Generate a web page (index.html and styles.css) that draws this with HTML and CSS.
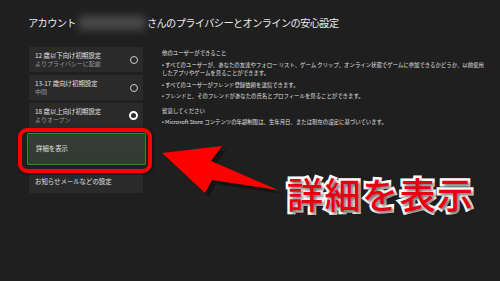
FILE: index.html
```html
<!DOCTYPE html>
<html lang="ja">
<head>
<meta charset="utf-8">
<link rel="stylesheet" href="styles.css">
</head>
<body>
<div class="page">
  <h1 class="title">アカウント<span class="blurname"></span>さんのプライバシーとオンラインの安心設定</h1>
  <div class="main">
    <div class="menu">
      <div class="card">
        <div class="txt"><div class="t">12 歳以下向け初期設定</div><div class="s">よりプライバシーに配慮</div></div>
        <span class="radio"></span>
      </div>
      <div class="card">
        <div class="txt"><div class="t">13-17 歳向け初期設定</div><div class="s">中間</div></div>
        <span class="radio"></span>
      </div>
      <div class="card">
        <div class="txt"><div class="t">18 歳以上向け初期設定</div><div class="s">よりオープン</div></div>
        <span class="radio on"></span>
      </div>
      <div class="card focus"><div class="t">詳細を表示</div></div>
      <div class="card plain"><div class="t">お知らせメールなどの設定</div></div>
    </div>
    <div class="info">
      <p class="head">他のユーザーができること</p>
      <ul>
        <li>すべてのユーザーが、あなたの友達やフォロー リスト、ゲーム クリップ、オンライン状態でゲームに参加できるかどうか、以前使用したアプリやゲームを見ることができます。</li>
        <li>すべてのユーザーがフレンド登録依頼を送信できます。</li>
        <li>フレンドと、そのフレンドがあなたの氏名とプロフィールを見ることができます。</li>
      </ul>
      <p class="head second">留意してください</p>
      <ul>
        <li>Microsoft Store コンテンツの年齢制限は、生年月日、または現在の設定に基づいています。</li>
      </ul>
    </div>
  </div>
  <div class="highlight"></div>
  <svg class="arrow" width="140" height="70" viewBox="0 0 140 70">
    <polygon points="5,27 66,20 55,35 122,64 56,54 49,67" fill="#000" opacity="0.35" transform="translate(2,2)"/>
    <polygon points="4,25 64,18 53,33 120,62 54,52 47,65" fill="#ff0000"/>
  </svg>
  <div class="label">詳細を表示</div>
</div>
</body>
</html>
```

FILE: styles.css
```css
html, body {
  margin: 0;
  padding: 0;
}
body {
  width: 500px;
  height: 281px;
  background: #1f1f1f;
  overflow: hidden;
  font-family: "Noto Sans CJK JP", "Noto Sans", sans-serif;
  color: #e6e6e6;
}
.page {
  position: relative;
  width: 500px;
  height: 281px;
}
.title {
  margin: 0;
  padding: 15px 0 0 28px;
  height: 16px;
  font-size: 10.2px;
  line-height: 16px;
  font-weight: 400;
  letter-spacing: -0.6px;
  color: #ececec;
  display: flex;
  align-items: center;
  white-space: nowrap;
}
.blurname {
  display: inline-block;
  width: 66px;
  height: 14px;
  margin: 0 2px 0 3px;
  background: #4a4a4a;
  filter: blur(4px);
}
.main {
  display: flex;
  padding: 16px 0 0 29px;
  gap: 19px;
}
.menu {
  width: 114px;
  display: flex;
  flex-direction: column;
  gap: 3px;
}
.card {
  background: #2a2a2a;
  height: 25px;
  display: flex;
  align-items: center;
  justify-content: space-between;
  padding: 0 6px;
  box-sizing: border-box;
}
.card .t {
  font-size: 6.4px;
  line-height: 8px;
  color: #e2e2e2;
  white-space: nowrap;
}
.card .s {
  font-size: 6px;
  line-height: 8px;
  color: #9a9a9a;
  white-space: nowrap;
}
.radio {
  width: 8px;
  height: 8px;
  border: 1px solid #cfcfcf;
  border-radius: 50%;
  box-sizing: border-box;
  margin-right: -1px;
}
.radio.on {
  width: 9px;
  height: 9px;
  border: 2.5px solid #fff;
  background: #2a2a2a;
}
.card.focus {
  height: 32px;
  margin: 2px -3px 2px -2px;
  padding-left: 8px;
  border: 1px solid #2e8a2e;
  box-shadow: inset 0 0 0 1px #1e4a1e;
  border-radius: 1px;
  background: linear-gradient(#363c36, #323832);
}
.card.plain {
  height: 23px;
}
.info {
  flex: 1;
  padding-top: 2px;
  font-size: 5.4px;
  line-height: 8.5px;
  color: #e0e0e0;
}
.info p {
  margin: 0;
}
.info .second {
  margin-top: 6px;
}
.info ul {
  list-style: none;
  margin: 3px 0 0 0;
  padding: 0 14px 0 0;
}
.info li {
  margin-bottom: 3px;
}
.info li::before {
  content: "• ";
}
.highlight {
  position: absolute;
  left: 18px;
  top: 128px;
  width: 134px;
  height: 45px;
  box-sizing: border-box;
  border: 4px solid #ff0000;
  border-radius: 9px;
  box-shadow: 1px 1px 3px rgba(0,0,0,0.5);
}
.arrow {
  position: absolute;
  left: 158px;
  top: 128px;
  overflow: visible;
}
.label {
  position: absolute;
  left: 287px;
  top: 169px;
  font-size: 36px;
  line-height: 48px;
  font-weight: 500;
  color: #e60012;
  -webkit-text-stroke: 5px #ffffff;
  paint-order: stroke fill;
  letter-spacing: 1.5px;
  text-shadow: 2px 2px 3px rgba(0,0,0,0.6);
  white-space: nowrap;
}
```
